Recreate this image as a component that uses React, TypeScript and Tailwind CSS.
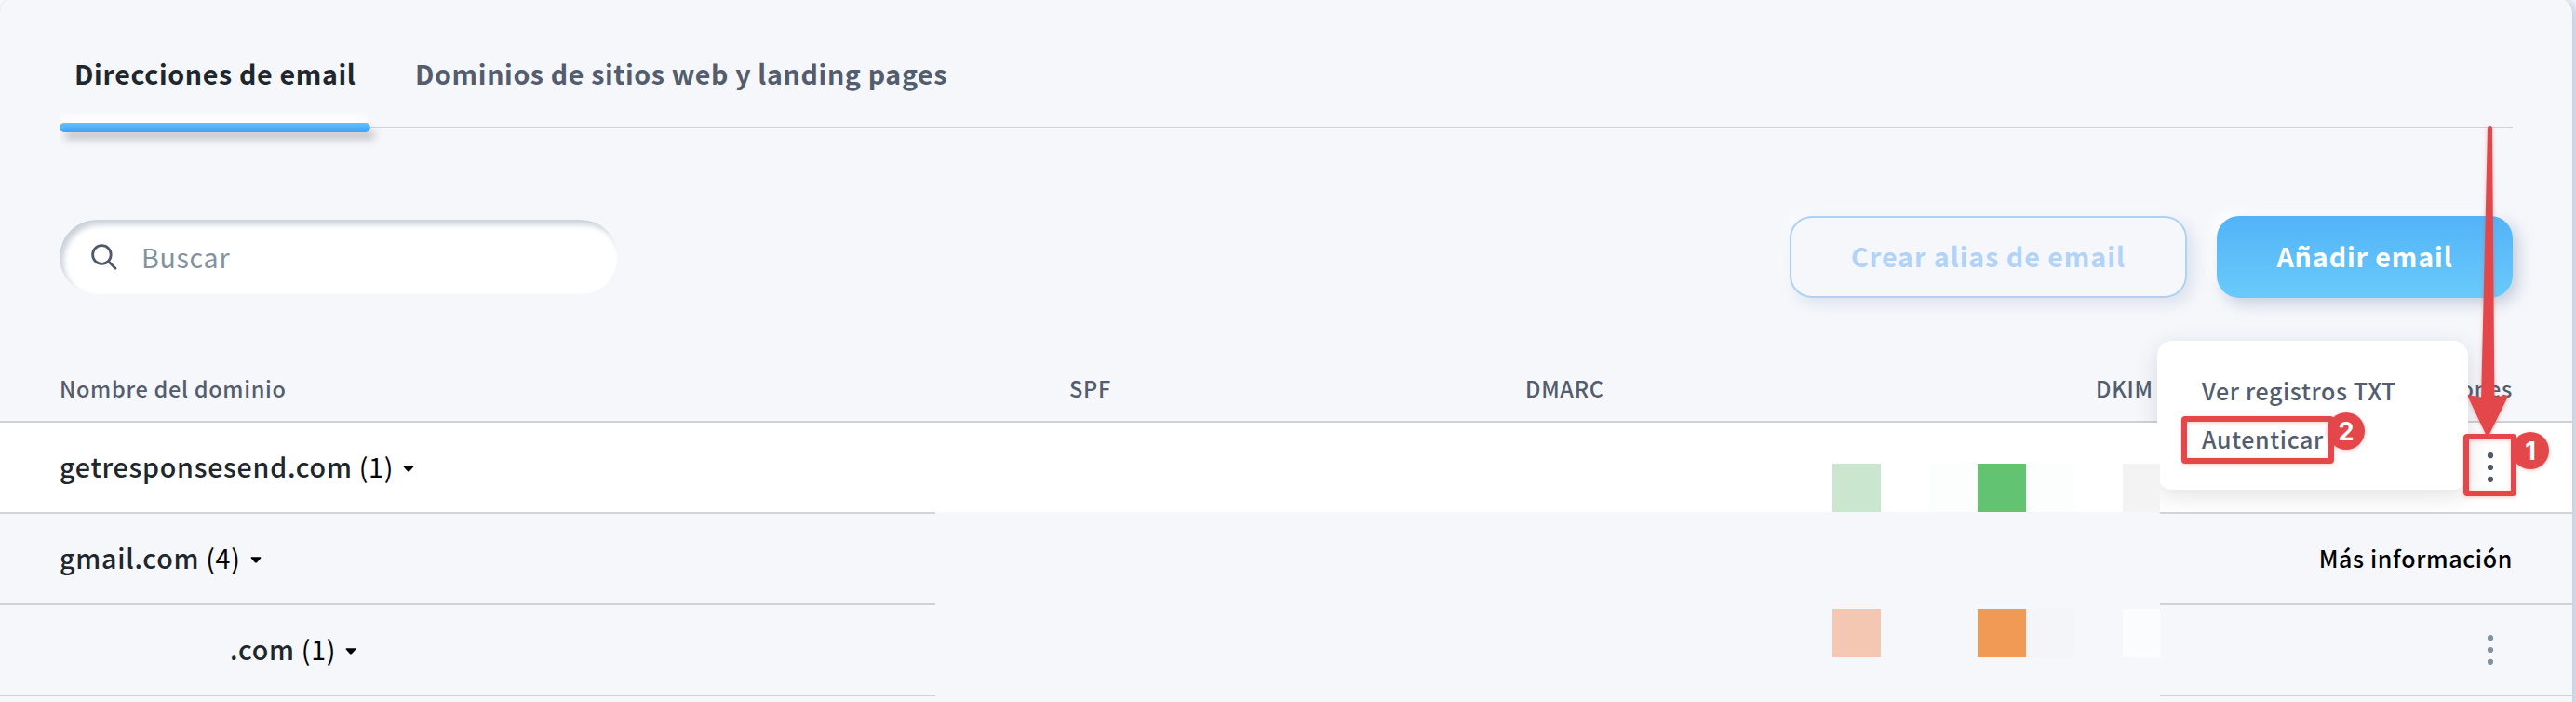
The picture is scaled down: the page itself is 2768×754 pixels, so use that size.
import React from 'react';

const tabs = [
  { label: 'Direcciones de email', active: true },
  { label: 'Dominios de sitios web y landing pages', active: false },
];

// --- ICONS ---
const SearchIcon = () => (
  <svg className="w-7 h-7" viewBox="0 0 28 28" fill="none" stroke="#4f596a" strokeWidth="2.8" strokeLinecap="round">
    <circle cx="11.4" cy="11.5" r="9.8" />
    <path d="M18.6 18.8L26 26.2" />
  </svg>
);

const Caret = () => (
  <svg className="w-3 h-[7px] ml-2.5 mt-[3px]" viewBox="0 0 12 7">
    <path d="M1.2 0.3H10.8Q12 0.5 11.2 1.5L7 6.2Q6 7 5 6.2L0.8 1.5Q0 0.5 1.2 0.3Z" fill="#000" />
  </svg>
);

const Dots = ({ color }: { color: string }) => (
  <svg className="w-2 h-8" viewBox="0 0 8 32" fill={color}>
    <circle cx="4" cy="3.2" r="3.1" />
    <circle cx="4" cy="16" r="3.1" />
    <circle cx="4" cy="28.8" r="3.1" />
  </svg>
);

const DomainName = ({ name, count }: { name: string; count: number }) => (
  <>
    <span className="font-medium text-[#20262d]">{name}</span>
    <span className="ml-[7px] text-black">({count})</span>
    <Caret />
  </>
);

const Badge = ({ children }: { children: React.ReactNode }) => (
  <span className="flex w-10 h-10 items-center justify-center rounded-full bg-[#e4474a] font-['Inter',sans-serif] text-[27px] font-bold leading-none text-white shadow-[0_1px_4px_rgba(228,71,74,0.3)]">
    {children}
  </span>
);

export default function App() {
  return (
    <div className="w-[2768px] h-[754px] overflow-hidden bg-white font-['Noto_Sans_CJK_SC','Noto_Sans',sans-serif]">
      <div className="relative w-[2764px] h-[770px] -mt-0.5 pt-0.5 rounded-2xl bg-[#f5f7fb] shadow-[4px_4px_12px_4px_#c6cfdd,-8px_-4px_8px_4px_#ffffff]">

        {/* TABS */}
        <nav className="flex mx-16 h-[138px] border-b-2 border-[#d0d1d5] text-[28.6px] font-bold tracking-[0.64px]">
          {tabs.map((tab) =>
            tab.active ? (
              <div key={tab.label} className="relative w-[334px] h-[158px] pl-4 text-[#20262d] leading-[158px]">
                {tab.label}
                <div className="absolute left-0 top-[132px] w-full h-2.5 rounded-[5px] bg-linear-to-b from-[#62c3fa] to-[#469ff3] shadow-[5px_8px_8px_rgba(80,84,92,0.3),-2px_-8px_8px_#ffffff] [clip-path:inset(-30px_-30px_-30px_0)]" />
              </div>
            ) : (
              <div key={tab.label} className="h-[158px] pl-12 text-[#535d6e] leading-[158px]">{tab.label}</div>
            )
          )}
        </nav>

        {/* TOOLBAR */}
        <div className="flex items-center mx-16 mt-[94px] h-[88px] text-[28.6px]">
          <div className="flex items-center w-[600px] h-20 pl-[34px] rounded-full bg-white shadow-[inset_4px_5px_6px_#c9d0d8]">
            <SearchIcon />
            <span className="ml-[26px] tracking-[0.7px] text-[#8292a1]">Buscar</span>
          </div>
          <button className="ml-auto w-[427px] h-[88px] pb-0.5 rounded-3xl border-2 border-[#afd1f5] font-bold tracking-[0.97px] text-[#b1d3f7] shadow-[6px_6px_16px_rgba(180,193,212,0.4),-6px_-6px_16px_rgba(255,255,255,0.5)]">
            Crear alias de email
          </button>
          <button className="ml-8 w-[318px] h-[88px] pb-0.5 rounded-3xl bg-linear-to-b from-[#52b3f8] to-[#69cafa] font-bold tracking-[0.9px] text-white shadow-[6px_6px_16px_rgba(165,178,200,0.6),-6px_-6px_12px_#ffffff]">
            Añadir email
          </button>
        </div>

        {/* TABLE HEADER */}
        <div className="grid grid-cols-[1085px_490px_613px_1fr] items-center mt-[62px] h-[72px] pt-0.5 pl-16 pr-16 border-b-2 border-[#d0d1d5] text-[23.5px] font-medium tracking-[0.7px] text-[#535d6e]">
          <span>Nombre del dominio</span>
          <span>SPF</span>
          <span>DMARC</span>
          <span className="flex justify-between">
            <span>DKIM</span>
            <span>Acciones</span>
          </span>
        </div>

        {/* ROWS */}
        <div className="text-[28.6px] tracking-[0.75px]">
          <div className="grid grid-cols-[1005px_1316px_1fr] h-[98px]">
            <div className="flex items-center pl-16 pb-px bg-white border-b-2 border-[#d4d5d6]">
              <DomainName name="getresponsesend.com" count={1} />
            </div>
            <div className="relative z-20 flex items-end h-24 pl-[964px] bg-white">
              <span className="w-[52px] h-[52px] bg-[#cbe6cf]" />
              <span className="w-[52px] h-[52px] ml-[52px] bg-[#fbfefc]" />
              <span className="w-[52px] h-[52px] bg-[#62c473]" />
              <span className="w-[52px] h-[52px] bg-[#fcfefd]" />
              <span className="w-10 h-[52px] ml-[52px] bg-[#f3f3f3]" />
            </div>
            <div className="flex items-center justify-end pr-[84px] bg-white border-b-2 border-[#d4d5d6]">
              <Dots color="#4f596a" />
            </div>
          </div>

          <div className="grid grid-cols-[1005px_1316px_1fr] h-[98px]">
            <div className="flex items-center pl-16 pb-px border-b-2 border-[#d0d1d5]">
              <DomainName name="gmail.com" count={4} />
            </div>
            <div />
            <div className="flex items-center justify-end pr-16 border-b-2 border-[#d0d1d5] text-[25px] font-medium tracking-[0.65px] text-black">
              Más información
            </div>
          </div>

          <div className="grid grid-cols-[1005px_1316px_1fr] h-[98px]">
            <div className="flex items-center pl-[247px] pb-px border-b-2 border-[#d0d1d5]">
              <DomainName name=".com" count={1} />
            </div>
            <div className="flex items-start pt-1 pl-[964px]">
              <span className="w-[52px] h-[52px] bg-[#f4c7b2]" />
              <span className="w-[52px] h-[52px] ml-[104px] bg-[#f19a55]" />
              <span className="w-[52px] h-[52px] bg-[#f4f5f8]" />
              <span className="w-10 h-[52px] ml-[52px] bg-[#fbfcfe]" />
            </div>
            <div className="flex items-center justify-end pr-[84px] border-b-2 border-[#d0d1d5]">
              <Dots color="#8292a1" />
            </div>
          </div>
        </div>

        {/* ACTIONS MENU */}
        <div className="absolute left-[2318px] top-[368px] z-10 w-[334px] h-40 pt-[27px] pl-12 rounded-2xl bg-white text-[25px] font-medium leading-[52px] text-[#535d6e] shadow-[0_6px_24px_rgba(60,70,90,0.16)]">
          <div className="tracking-[0.62px]">Ver registros TXT</div>
          <div className="tracking-[0.64px]">Autenticar</div>
        </div>

        {/* CALLOUTS */}
        <div className="absolute left-[2344px] top-[449px] z-30 w-[164px] h-[51px] rounded-[4px] border-[6px] border-[#e4474a] shadow-[0_1px_4px_rgba(228,71,74,0.3),inset_0_1px_4px_rgba(228,71,74,0.3)]" />
        <div className="absolute left-[2501px] top-[445px] z-30"><Badge>2</Badge></div>
        <svg className="absolute left-[2640px] top-[130px] z-30 w-[70px] h-[350px] drop-shadow-[0_1px_2px_rgba(228,71,74,0.35)]" viewBox="0 0 70 350">
          <path d="M33 9.5Q33 7 35.5 7Q38 7 38 9.5L40.4 298.6L53.2 296.6Q55.4 296.7 54.6 298.6L35 338.5Q33 341 31 338.5L12 298.6Q11.2 296.2 13.6 296.6L26.1 298.6Z" fill="#e4474a" />
        </svg>
        <div className="absolute left-[2647px] top-[468px] z-30 w-[57px] h-[67px] rounded-[4px] border-[6px] border-[#e4474a] shadow-[0_1px_4px_rgba(228,71,74,0.3),inset_0_1px_4px_rgba(228,71,74,0.3)]" />
        <div className="absolute left-[2699px] top-[466px] z-30"><Badge>1</Badge></div>
      </div>
    </div>
  );
}
